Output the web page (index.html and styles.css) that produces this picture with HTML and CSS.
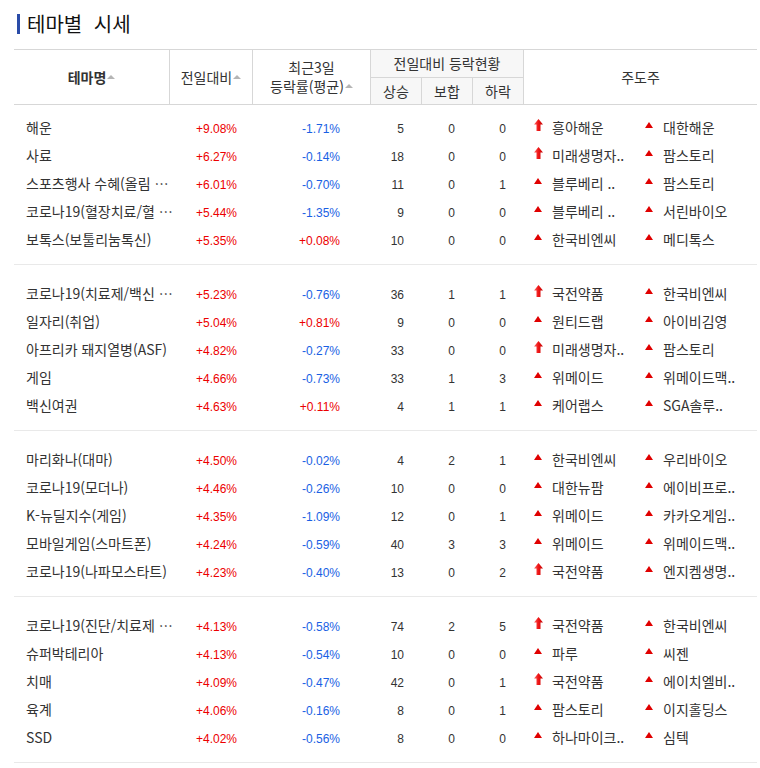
FILE: index.html
```html
<!DOCTYPE html>
<html lang="ko">
<head>
<meta charset="utf-8">
<title>테마별 시세</title>
<link rel="stylesheet" href="styles.css">
</head>
<body>
<svg class="defs" width="0" height="0" aria-hidden="true">
  <defs>
    <linearGradient id="arrowGrad" x1="0" y1="0" x2="1" y2="0">
      <stop offset="0" stop-color="#ff6a6a"/>
      <stop offset="0.45" stop-color="#f01818"/>
      <stop offset="1" stop-color="#c40000"/>
    </linearGradient>
    <symbol id="ic-arrow" viewBox="0 0 9 12">
      <polygon points="4.5,0 9,5.5 6.5,5.5 6.5,12 2.5,12 2.5,5.5 0,5.5" fill="url(#arrowGrad)"/>
    </symbol>
    <symbol id="ic-tri" viewBox="0 0 8 6">
      <polygon points="4,0 8,6 0,6" fill="#e00000"/>
    </symbol>
  </defs>
</svg>
<div class="page">
  <h2 class="title">테마별 시세</h2>
  <div class="board">
    <div class="thead">
      <div class="th c-name"><strong>테마명</strong><i class="sort"></i></div>
      <div class="th c-rate">전일대비<i class="sort"></i></div>
      <div class="th c-avg"><span>최근3일<br>등락률(평균)<i class="sort"></i></span></div>
      <div class="th c-status gray">전일대비 등락현황</div>
      <div class="th c-up gray">상승</div>
      <div class="th c-flat gray">보합</div>
      <div class="th c-down gray">하락</div>
      <div class="th c-lead">주도주</div>
    </div>

    <div class="group first">
      <div class="row">
        <div class="name">해운</div><div class="num rate plus">+9.08%</div><div class="num avg minus">-1.71%</div>
        <div class="cnt">5</div><div class="cnt">0</div><div class="cnt">0</div>
        <div class="lead"><span class="stock"><svg class="ic arrow"><use href="#ic-arrow"/></svg>흥아해운</span><span class="stock"><svg class="ic tri"><use href="#ic-tri"/></svg>대한해운</span></div>
      </div>
      <div class="row">
        <div class="name">사료</div><div class="num rate plus">+6.27%</div><div class="num avg minus">-0.14%</div>
        <div class="cnt">18</div><div class="cnt">0</div><div class="cnt">0</div>
        <div class="lead"><span class="stock"><svg class="ic arrow"><use href="#ic-arrow"/></svg>미래생명자..</span><span class="stock"><svg class="ic tri"><use href="#ic-tri"/></svg>팜스토리</span></div>
      </div>
      <div class="row">
        <div class="name">스포츠행사 수혜(올림 …</div><div class="num rate plus">+6.01%</div><div class="num avg minus">-0.70%</div>
        <div class="cnt">11</div><div class="cnt">0</div><div class="cnt">1</div>
        <div class="lead"><span class="stock"><svg class="ic tri"><use href="#ic-tri"/></svg>블루베리 ..</span><span class="stock"><svg class="ic tri"><use href="#ic-tri"/></svg>팜스토리</span></div>
      </div>
      <div class="row">
        <div class="name">코로나19(혈장치료/혈 …</div><div class="num rate plus">+5.44%</div><div class="num avg minus">-1.35%</div>
        <div class="cnt">9</div><div class="cnt">0</div><div class="cnt">0</div>
        <div class="lead"><span class="stock"><svg class="ic tri"><use href="#ic-tri"/></svg>블루베리 ..</span><span class="stock"><svg class="ic tri"><use href="#ic-tri"/></svg>서린바이오</span></div>
      </div>
      <div class="row">
        <div class="name">보톡스(보툴리눔톡신)</div><div class="num rate plus">+5.35%</div><div class="num avg plus">+0.08%</div>
        <div class="cnt">10</div><div class="cnt">0</div><div class="cnt">0</div>
        <div class="lead"><span class="stock"><svg class="ic tri"><use href="#ic-tri"/></svg>한국비엔씨</span><span class="stock"><svg class="ic tri"><use href="#ic-tri"/></svg>메디톡스</span></div>
      </div>
    </div>

    <div class="group">
      <div class="row">
        <div class="name">코로나19(치료제/백신 …</div><div class="num rate plus">+5.23%</div><div class="num avg minus">-0.76%</div>
        <div class="cnt">36</div><div class="cnt">1</div><div class="cnt">1</div>
        <div class="lead"><span class="stock"><svg class="ic arrow"><use href="#ic-arrow"/></svg>국전약품</span><span class="stock"><svg class="ic tri"><use href="#ic-tri"/></svg>한국비엔씨</span></div>
      </div>
      <div class="row">
        <div class="name">일자리(취업)</div><div class="num rate plus">+5.04%</div><div class="num avg plus">+0.81%</div>
        <div class="cnt">9</div><div class="cnt">0</div><div class="cnt">0</div>
        <div class="lead"><span class="stock"><svg class="ic tri"><use href="#ic-tri"/></svg>원티드랩</span><span class="stock"><svg class="ic tri"><use href="#ic-tri"/></svg>아이비김영</span></div>
      </div>
      <div class="row">
        <div class="name">아프리카 돼지열병(ASF)</div><div class="num rate plus">+4.82%</div><div class="num avg minus">-0.27%</div>
        <div class="cnt">33</div><div class="cnt">0</div><div class="cnt">0</div>
        <div class="lead"><span class="stock"><svg class="ic arrow"><use href="#ic-arrow"/></svg>미래생명자..</span><span class="stock"><svg class="ic tri"><use href="#ic-tri"/></svg>팜스토리</span></div>
      </div>
      <div class="row">
        <div class="name">게임</div><div class="num rate plus">+4.66%</div><div class="num avg minus">-0.73%</div>
        <div class="cnt">33</div><div class="cnt">1</div><div class="cnt">3</div>
        <div class="lead"><span class="stock"><svg class="ic tri"><use href="#ic-tri"/></svg>위메이드</span><span class="stock"><svg class="ic tri"><use href="#ic-tri"/></svg>위메이드맥..</span></div>
      </div>
      <div class="row">
        <div class="name">백신여권</div><div class="num rate plus">+4.63%</div><div class="num avg plus">+0.11%</div>
        <div class="cnt">4</div><div class="cnt">1</div><div class="cnt">1</div>
        <div class="lead"><span class="stock"><svg class="ic tri"><use href="#ic-tri"/></svg>케어랩스</span><span class="stock"><svg class="ic tri"><use href="#ic-tri"/></svg>SGA솔루..</span></div>
      </div>
    </div>

    <div class="group">
      <div class="row">
        <div class="name">마리화나(대마)</div><div class="num rate plus">+4.50%</div><div class="num avg minus">-0.02%</div>
        <div class="cnt">4</div><div class="cnt">2</div><div class="cnt">1</div>
        <div class="lead"><span class="stock"><svg class="ic tri"><use href="#ic-tri"/></svg>한국비엔씨</span><span class="stock"><svg class="ic tri"><use href="#ic-tri"/></svg>우리바이오</span></div>
      </div>
      <div class="row">
        <div class="name">코로나19(모더나)</div><div class="num rate plus">+4.46%</div><div class="num avg minus">-0.26%</div>
        <div class="cnt">10</div><div class="cnt">0</div><div class="cnt">0</div>
        <div class="lead"><span class="stock"><svg class="ic tri"><use href="#ic-tri"/></svg>대한뉴팜</span><span class="stock"><svg class="ic tri"><use href="#ic-tri"/></svg>에이비프로..</span></div>
      </div>
      <div class="row">
        <div class="name">K-뉴딜지수(게임)</div><div class="num rate plus">+4.35%</div><div class="num avg minus">-1.09%</div>
        <div class="cnt">12</div><div class="cnt">0</div><div class="cnt">1</div>
        <div class="lead"><span class="stock"><svg class="ic tri"><use href="#ic-tri"/></svg>위메이드</span><span class="stock"><svg class="ic tri"><use href="#ic-tri"/></svg>카카오게임..</span></div>
      </div>
      <div class="row">
        <div class="name">모바일게임(스마트폰)</div><div class="num rate plus">+4.24%</div><div class="num avg minus">-0.59%</div>
        <div class="cnt">40</div><div class="cnt">3</div><div class="cnt">3</div>
        <div class="lead"><span class="stock"><svg class="ic tri"><use href="#ic-tri"/></svg>위메이드</span><span class="stock"><svg class="ic tri"><use href="#ic-tri"/></svg>위메이드맥..</span></div>
      </div>
      <div class="row">
        <div class="name">코로나19(나파모스타트)</div><div class="num rate plus">+4.23%</div><div class="num avg minus">-0.40%</div>
        <div class="cnt">13</div><div class="cnt">0</div><div class="cnt">2</div>
        <div class="lead"><span class="stock"><svg class="ic arrow"><use href="#ic-arrow"/></svg>국전약품</span><span class="stock"><svg class="ic tri"><use href="#ic-tri"/></svg>엔지켐생명..</span></div>
      </div>
    </div>

    <div class="group">
      <div class="row">
        <div class="name">코로나19(진단/치료제 …</div><div class="num rate plus">+4.13%</div><div class="num avg minus">-0.58%</div>
        <div class="cnt">74</div><div class="cnt">2</div><div class="cnt">5</div>
        <div class="lead"><span class="stock"><svg class="ic arrow"><use href="#ic-arrow"/></svg>국전약품</span><span class="stock"><svg class="ic tri"><use href="#ic-tri"/></svg>한국비엔씨</span></div>
      </div>
      <div class="row">
        <div class="name">슈퍼박테리아</div><div class="num rate plus">+4.13%</div><div class="num avg minus">-0.54%</div>
        <div class="cnt">10</div><div class="cnt">0</div><div class="cnt">0</div>
        <div class="lead"><span class="stock"><svg class="ic tri"><use href="#ic-tri"/></svg>파루</span><span class="stock"><svg class="ic tri"><use href="#ic-tri"/></svg>씨젠</span></div>
      </div>
      <div class="row">
        <div class="name">치매</div><div class="num rate plus">+4.09%</div><div class="num avg minus">-0.47%</div>
        <div class="cnt">42</div><div class="cnt">0</div><div class="cnt">1</div>
        <div class="lead"><span class="stock"><svg class="ic arrow"><use href="#ic-arrow"/></svg>국전약품</span><span class="stock"><svg class="ic tri"><use href="#ic-tri"/></svg>에이치엘비..</span></div>
      </div>
      <div class="row">
        <div class="name">육계</div><div class="num rate plus">+4.06%</div><div class="num avg minus">-0.16%</div>
        <div class="cnt">8</div><div class="cnt">0</div><div class="cnt">1</div>
        <div class="lead"><span class="stock"><svg class="ic tri"><use href="#ic-tri"/></svg>팜스토리</span><span class="stock"><svg class="ic tri"><use href="#ic-tri"/></svg>이지홀딩스</span></div>
      </div>
      <div class="row">
        <div class="name">SSD</div><div class="num rate plus">+4.02%</div><div class="num avg minus">-0.56%</div>
        <div class="cnt">8</div><div class="cnt">0</div><div class="cnt">0</div>
        <div class="lead"><span class="stock"><svg class="ic tri"><use href="#ic-tri"/></svg>하나마이크..</span><span class="stock"><svg class="ic tri"><use href="#ic-tri"/></svg>심텍</span></div>
      </div>
    </div>
  </div>
</div>
</body>
</html>
```

FILE: styles.css
```css
* { box-sizing: border-box; }

html, body {
  margin: 0;
  padding: 0;
  background: #fff;
}

body {
  font-family: "Noto Sans CJK KR", "Noto Sans", sans-serif;
  font-size: 14px;
  color: #333;
}

.defs {
  display: block;
  width: 0;
  height: 0;
  overflow: hidden;
}

.page {
  padding: 12px 0 0 14px;
  width: 757px;
}

/* ---------- title ---------- */
.title {
  display: flex;
  align-items: center;
  margin: 0 0 13px 0;
  padding-left: 3px;
  height: 24px;
  font-size: 20px;
  font-weight: normal;
  line-height: 24px;
  color: #111;
  word-spacing: 6px;
}

.title::before {
  content: "";
  display: block;
  width: 3px;
  height: 20px;
  margin-right: 7px;
  background: #2a4ca8;
}

/* ---------- board ---------- */
.board {
  width: 743px;
}

.thead {
  display: grid;
  grid-template-columns: 156px 83px 118px 51px 51px 51px 233px;
  grid-template-rows: 28px 26px;
  border-top: 1px solid #d7d7d7;
  border-bottom: 1px solid #d7d7d7;
}

.th {
  display: flex;
  align-items: center;
  justify-content: center;
  border-right: 1px solid #d7d7d7;
  color: #333;
  line-height: 19px;
  text-align: center;
  white-space: nowrap;
}

.th strong {
  font-weight: bold;
  color: #333;
}

.th.gray { background: #f7f7f7; }

.c-name  { grid-column: 1; grid-row: 1 / 3; }
.c-rate  { grid-column: 2; grid-row: 1 / 3; }
.c-avg   { grid-column: 3; grid-row: 1 / 3; }
.c-status{ grid-column: 4 / 7; grid-row: 1; border-bottom: 1px solid #d7d7d7; }
.c-up    { grid-column: 4; grid-row: 2; }
.c-flat  { grid-column: 5; grid-row: 2; }
.c-down  { grid-column: 6; grid-row: 2; }
.c-lead  { grid-column: 7; grid-row: 1 / 3; border-right: 0; }

.sort {
  display: inline-block;
  width: 0;
  height: 0;
  margin-left: 1px;
  border-left: 4px solid transparent;
  border-right: 4px solid transparent;
  border-bottom: 4px solid #b5b5b5;
  vertical-align: 4px;
}

/* ---------- body ---------- */
.group {
  padding: 14px 0 11px;
  border-bottom: 1px solid #e9e9e9;
}

.group.first { padding-top: 8px; }

.row {
  display: grid;
  grid-template-columns: 156px 83px 118px 51px 51px 51px 233px;
  grid-template-rows: 28px;
  line-height: 28px;
  white-space: nowrap;
}

.name {
  padding-left: 12px;
  color: #333;
}

.num, .cnt {
  font-family: "Liberation Sans", Arial, sans-serif;
  font-size: 12px;
  line-height: 28px;
  padding-top: 2px;
  text-align: right;
}

.rate { padding-right: 16px; }
.avg  { padding-right: 31px; }
.cnt  { padding-right: 18px; color: #333; }

.plus  { color: #ec0000; }
.minus { color: #1a5fe4; }

.lead {
  padding-left: 10px;
  color: #333;
}

.stock {
  display: inline-block;
  width: 111px;
}

.ic { display: inline-block; }

.ic.arrow {
  width: 9px;
  height: 12px;
  margin-right: 9px;
  vertical-align: 2px;
}

.ic.tri {
  width: 8px;
  height: 6px;
  margin-right: 10px;
  vertical-align: 5px;
}
```
